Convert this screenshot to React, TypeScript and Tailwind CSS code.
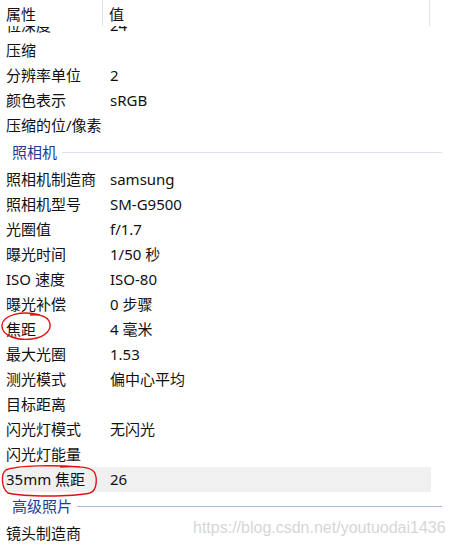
import React from "react";

type Row = { k: string; v?: string; hl?: boolean };
type Item = Row | { section: string; strong?: boolean };

const items: Item[] = [
  { k: "位深度", v: "24" },
  { k: "压缩" },
  { k: "分辨率单位", v: "2" },
  { k: "颜色表示", v: "sRGB" },
  { k: "压缩的位/像素" },
  { section: "照相机" },
  { k: "照相机制造商", v: "samsung" },
  { k: "照相机型号", v: "SM-G9500" },
  { k: "光圈值", v: "f/1.7" },
  { k: "曝光时间", v: "1/50 秒" },
  { k: "ISO 速度", v: "ISO-80" },
  { k: "曝光补偿", v: "0 步骤" },
  { k: "焦距", v: "4 毫米" },
  { k: "最大光圈", v: "1.53" },
  { k: "测光模式", v: "偏中心平均" },
  { k: "目标距离" },
  { k: "闪光灯模式", v: "无闪光" },
  { k: "闪光灯能量" },
  { k: "35mm 焦距", v: "26", hl: true },
  { section: "高级照片", strong: true },
  { k: "镜头制造商" },
];

export default function App() {
  return (
    <main
      className="relative flex flex-col w-[452px] h-[546px] overflow-hidden bg-white text-[15px] text-[#111]"
      style={{ fontFamily: '"Noto Sans", "Noto Sans CJK SC", sans-serif' }}
    >
      {/* column header */}
      <div className="flex h-[26px] shrink-0 bg-white">
        <div className="w-[103px] pl-[6px] leading-[28px] border-r border-[#e3e3e3]">属性</div>
        <div className="w-[327px] pl-[6px] leading-[28px] border-r border-[#e3e3e3]">值</div>
      </div>

      {/* scrolled list */}
      <div className="flex-1 overflow-hidden">
        <div className="-mt-[13px]">
          {items.map((it, i) =>
            "section" in it ? (
              <div key={i} className="flex items-center h-[29px] pl-[12px] pr-[10px]">
                <span className="text-[#1e3a96]">{it.section}</span>
                <div className={`flex-1 h-px ml-[5px] ${it.strong ? "bg-[#a8b8d8]" : "bg-[#dfe4ec]"}`} />
              </div>
            ) : (
              <div
                key={i}
                className={`flex items-center h-[25px] ml-[4px] w-[427px] ${it.hl ? "bg-[#f0f0f0]" : ""}`}
              >
                <div className="w-[99px] pl-[2px] whitespace-nowrap">{it.k}</div>
                <div className="pl-[7px] whitespace-nowrap">{it.v}</div>
              </div>
            )
          )}
        </div>
      </div>

      {/* red hand-drawn marks */}
      <svg className="absolute left-0 top-[311px]" width="54" height="32" viewBox="0 0 54 32">
        <path
          d="M40 4 C22 -1 3 4 2 14 C1 24 16 30 32 28 C46 26 53 18 49 10 C46 5 40 3 30 4"
          fill="none"
          stroke="#e01010"
          strokeWidth="1.4"
        />
      </svg>
      <svg className="absolute left-0 top-[464px]" width="100" height="34" viewBox="0 0 100 34">
        <path
          d="M80 3 C55 1 18 1 6 6 C1 9 1 24 8 29 C24 33 72 33 90 29 C98 26 98 10 92 6 C86 2 70 2 60 3"
          fill="none"
          stroke="#e01010"
          strokeWidth="1.4"
        />
      </svg>

      {/* watermark */}
      <div
        className="absolute left-[193px] top-[516px] text-[16px] text-[#d6d6d6] whitespace-nowrap"
        style={{ fontFamily: '"Liberation Sans", Arial, sans-serif' }}
      >
        https://blog.csdn.net/youtuodai1436
      </div>
    </main>
  );
}
